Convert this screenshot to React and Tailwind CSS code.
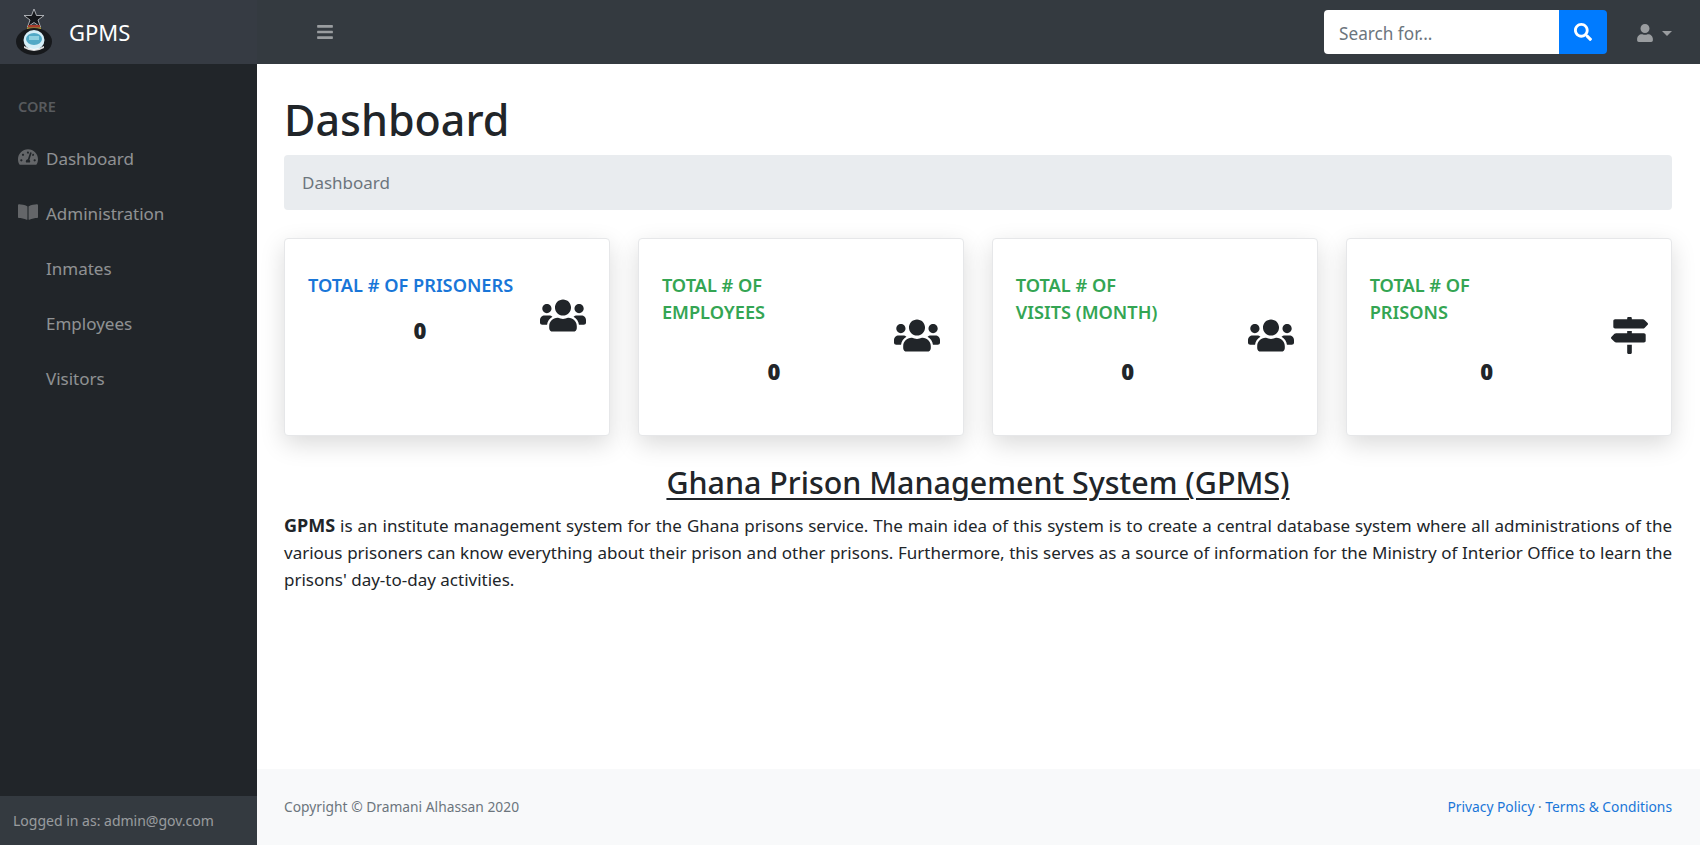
import React from 'react';
import { FaBars, FaSearch, FaUser, FaUsers, FaMapSigns, FaTachometerAlt, FaBookOpen } from 'react-icons/fa';

function Logo() {
  return (
    <svg width="36" height="46" viewBox="0 0 36 46" className="shrink-0">
      <polygon points="18,0 20.500,6.500 28,6.500 22,11 24.500,18 18,13.500 11.500,18 14,11 8,6.500 15.500,6.500" fill="#14161a" stroke="#c9ccd0" strokeWidth="0.8" />
      <rect x="12" y="16" width="12" height="2.500" fill="#a83a2a" />
      <rect x="11" y="18.500" width="14" height="2.500" fill="#b9a23a" />
      <rect x="11" y="21" width="14" height="2.500" fill="#2f7a3f" />
      <ellipse cx="18" cy="32.500" rx="18" ry="13.500" fill="#17191c" />
      <ellipse cx="18" cy="31" rx="10.500" ry="10" fill="#d6eef7" />
      <ellipse cx="18" cy="30" rx="8" ry="6" fill="#52a9c6" />
      <rect x="13" y="27" width="10" height="4" fill="#8fd0e0" />
      <path d="M8 37 Q18 43 28 37 L28 39 Q18 45 8 39 Z" fill="#ffffff" opacity="0.85" />
    </svg>
  );
}

function StatCard({ title, titleColor, icon: Icon, iconClass, colWidth, numberMargin }) {
  return (
    <div className="flex-1 self-stretch bg-white border border-[#e6e7e9] rounded-[4px] shadow-[0_8px_24px_rgba(0,0,0,0.15)] pl-[23px] pr-[23px] pt-[33px]">
      <div className="flex items-center justify-between">
        <div className={colWidth}>
          <div className={`text-[18.200px] leading-[27px] font-semibold ${titleColor}`}>{title}</div>
          <div className={`text-center text-[22px] leading-[32px] font-black text-[#212529] ${numberMargin}`}>0</div>
        </div>
        <Icon className={iconClass} />
      </div>
    </div>
  );
}

function NavItem({ icon: Icon, children }) {
  return (
    <div className="h-[55px] flex items-center text-[17px] text-white/50 pl-[18px]">
      <span className="w-[28px] flex items-start -mt-[3px]">
        {Icon ? <Icon className="w-[20px] h-[18px] text-white/30" /> : null}
      </span>
      <span>{children}</span>
    </div>
  );
}

export default function App() {
  return (
    <div className="w-[1700px] h-[845px] flex flex-col overflow-hidden bg-white text-[#212529] font-['Noto_Sans','Open_Sans',sans-serif] text-[17px]">
      <header className="h-16 shrink-0 bg-[#343a40] flex items-center">
        <div className="w-[257px] h-full flex items-center pl-[16px] gap-[17px] bg-[#363b43]">
          <Logo />
          <span className="text-[22px] text-white">GPMS</span>
        </div>
        <button className="ml-[60px] text-white/50"><FaBars className="w-[16px] h-[18px]" /></button>
        <div className="ml-auto flex items-center h-[44px]">
          <div className="w-[235px] h-full bg-white rounded-l-[4px] flex items-center pl-[15px] pt-[4px] text-[17.200px] text-[#6c757d]">Search for...</div>
          <div className="w-[48px] h-full bg-[#007bff] rounded-r-[4px] flex items-center justify-center">
            <FaSearch className="w-[18px] h-[18px] text-white" />
          </div>
        </div>
        <div className="ml-[30px] mr-[28px] flex items-center gap-[9px] text-white/50 pt-[2px]">
          <FaUser className="w-[16px] h-[18px]" />
          <span className="w-0 h-0 border-l-[5.500px] border-r-[5.500px] border-t-[5.500px] border-l-transparent border-r-transparent border-t-white/50" />
        </div>
      </header>
      <div className="flex-1 flex min-h-0">
        <aside className="w-[257px] shrink-0 bg-[#212529] flex flex-col">
          <div className="text-[14.500px] font-semibold text-white/25 pl-[18px] pt-[32px] pb-[15px] leading-[20px]">CORE</div>
          <nav className="flex-1">
            <NavItem icon={FaTachometerAlt}>Dashboard</NavItem>
            <NavItem icon={FaBookOpen}>Administration</NavItem>
            <NavItem>Inmates</NavItem>
            <NavItem>Employees</NavItem>
            <NavItem>Visitors</NavItem>
          </nav>
          <div className="h-[49px] bg-[#343a40] pl-[13px] flex items-center text-[14px] text-white/50">Logged in as: admin@gov.com</div>
        </aside>
        <main className="flex-1 min-w-0 flex flex-col">
          <div className="flex-1 pl-[27px] pr-[28px] pt-[29px]">
            <h1 className="text-[43px] leading-[54px] font-medium">Dashboard</h1>
            <div className="mt-[8px] h-[55px] bg-[#e9ecef] rounded-[4px] flex items-center px-[18px] text-[#6c757d]">Dashboard</div>
            <div className="mt-[28px] h-[198px] flex gap-[27.500px]">
              <StatCard title="TOTAL # OF PRISONERS" titleColor="text-[#1976d8]" icon={FaUsers} iconClass="w-[46px] h-[37px]" colWidth="w-[224px] pb-[13px]" numberMargin="mt-[15px]" />
              <StatCard title={<>TOTAL # OF<br />EMPLOYEES</>} titleColor="text-[#34a553]" icon={FaUsers} iconClass="w-[46px] h-[37px]" colWidth="w-[224px] pb-[12px]" numberMargin="mt-[29px]" />
              <StatCard title={<>TOTAL # OF<br />VISITS (MONTH)</>} titleColor="text-[#34a553]" icon={FaUsers} iconClass="w-[46px] h-[37px]" colWidth="w-[224px] pb-[12px]" numberMargin="mt-[29px]" />
              <StatCard title={<>TOTAL # OF<br />PRISONS</>} titleColor="text-[#34a553]" icon={FaMapSigns} iconClass="w-[37px] h-[37px]" colWidth="w-[234px] pb-[12px]" numberMargin="mt-[29px]" />
            </div>
            <h2 className="mt-[28px] text-center text-[30.400px] leading-[38px] font-medium underline underline-offset-[4px] decoration-2">Ghana Prison Management System (GPMS)</h2>
            <p className="mt-[10px] text-[17px] leading-[27px] text-justify">
              <strong className="font-bold text-[18px]">GPMS</strong> is an institute management system for the Ghana prisons service. The main idea of this system is to create a central database system where all administrations of the various prisoners can know everything about their prison and other prisons. Furthermore, this serves as a source of information for the Ministry of Interior Office to learn the prisons' day-to-day activities.
            </p>
          </div>
          <footer className="h-[76px] shrink-0 bg-[#f8f9fa] pl-[27px] pr-[28px] pt-px flex items-center justify-between text-[13.800px]">
            <span className="text-[#6c757d]">Copyright © Dramani Alhassan 2020</span>
            <span className="text-[#6c757d]"><a className="text-[#1976d8]">Privacy Policy</a> · <a className="text-[#1976d8]">Terms &amp; Conditions</a></span>
          </footer>
        </main>
      </div>
    </div>
  );
}
